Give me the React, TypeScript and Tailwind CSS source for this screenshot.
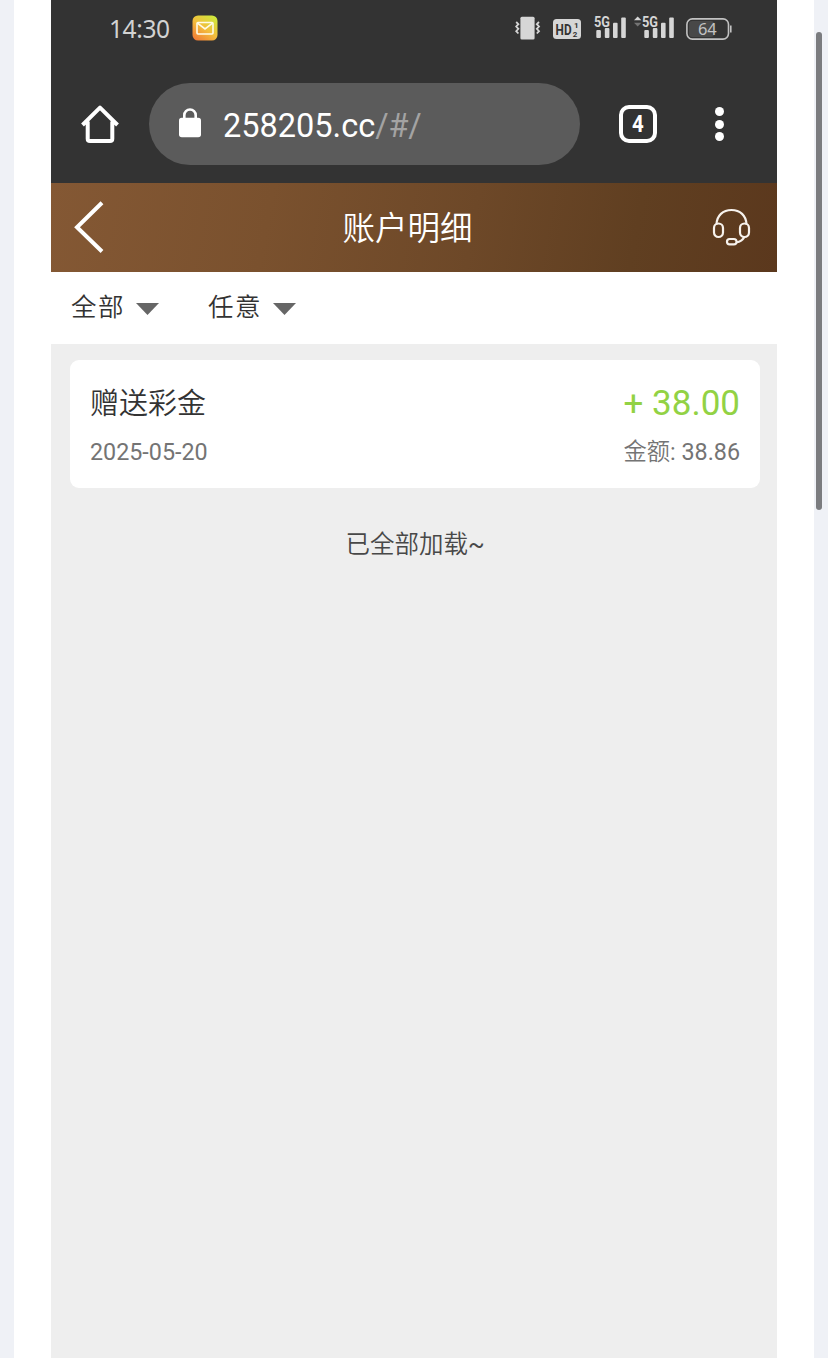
import { clsx } from "clsx";

const cjk = "font-['Roboto','Noto_Sans_CJK_SC',sans-serif]";

const filters = [
  { label: "全部", className: "" },
  { label: "任意", className: "ml-[49px]" },
];

const records = [
  { title: "赠送彩金", change: "+ 38.00", date: "2025-05-20", amount: "38.86" },
];

function MailBadge() {
  return (
    <svg className="ml-[22px] h-[26px] w-[26px]" viewBox="0 0 26 26" fill="none">
      <defs>
        <linearGradient id="mail" x1="3" y1="25" x2="21" y2="1" gradientUnits="userSpaceOnUse">
          <stop offset="0" stopColor="#f07a35" />
          <stop offset="0.5" stopColor="#f3bd3c" />
          <stop offset="1" stopColor="#cfe83c" />
        </linearGradient>
      </defs>
      <rect x="0.5" y="0.5" width="25" height="25" rx="5.5" fill="url(#mail)" />
      <rect x="5" y="7.5" width="16" height="11.5" rx="1" stroke="#fffbe6" strokeWidth="1.6" />
      <path d="M5.5 8.2 13 14l7.5-5.8" stroke="#fffbe6" strokeWidth="1.6" />
    </svg>
  );
}

function VibrateIcon() {
  return (
    <svg className="h-[24px] w-[26px]" viewBox="0 0 26 24" fill="none">
      <rect x="5.4" y="0.8" width="14.2" height="22.7" rx="1.5" fill="#d6d6d6" />
      <path
        d="M1.2 6l2.2 2.2-2.2 2.3 2.2 2.3-2.2 2.4 2.2 2.3M24 6l-2.2 2.2 2.2 2.3-2.2 2.3 2.2 2.4-2.2 2.3"
        stroke="#d6d6d6"
        strokeWidth="1.8"
      />
    </svg>
  );
}

function HdIcon() {
  return (
    <svg className="mt-[2px] ml-[12px] h-[20px] w-[28px]" viewBox="0 0 28 20">
      <rect width="28" height="20" rx="3.5" fill="#d6d6d6" />
      <g fill="#333" className="font-['Roboto',sans-serif] font-bold">
        <text x="2.6" y="15.6" fontSize="15.5" textLength="16" lengthAdjust="spacingAndGlyphs">HD</text>
        <text x="21" y="8.8" fontSize="8">1</text>
        <text x="19.8" y="17.6" fontSize="8">2</text>
      </g>
    </svg>
  );
}

function SignalIcon({ arrows = false, className }: { arrows?: boolean; className?: string }) {
  return (
    <svg className={clsx("mb-[5px] h-[27px]", className)} viewBox={arrows ? "-8 -3 41 27" : "0 -3 33 27"} fill="#d6d6d6">
      {arrows && (
        <>
          <path d="M-8 5.3h7.4L-4.3 1.5z" />
          <path d="M-8 7.7h7.4l-3.7 3.8z" fill="#747474" />
        </>
      )}
      <text x="0" y="11.5" fontSize="15.5" textLength="16" lengthAdjust="spacingAndGlyphs" className="font-['Roboto',sans-serif] font-bold">5G</text>
      <rect x="2.3" y="15" width="4.6" height="8" rx="1" />
      <rect x="10.8" y="13" width="4.6" height="10" rx="1" />
      <rect x="19" y="7.8" width="4.6" height="15.2" rx="1" />
      <rect x="27.2" y="2.5" width="4.6" height="20.5" rx="1" />
    </svg>
  );
}

function BatteryIcon() {
  return (
    <svg className="mt-[1px] ml-[11px] h-[22px] w-[46px]" viewBox="0 0 46 22" fill="none">
      <rect x="3" y="3" width="25" height="16" rx="3" fill="#484848" />
      <rect x="0.9" y="0.9" width="41.6" height="20.2" rx="5.5" stroke="#c2c2c2" strokeWidth="1.6" />
      <path d="M44.8 7.5v7" stroke="#c2c2c2" strokeWidth="1.6" />
      <text x="12" y="17" fontSize="16.5" textLength="18.8" fill="#c2c2c2" className="font-['Noto_Sans',sans-serif]">64</text>
    </svg>
  );
}

function StatusBar() {
  return (
    <div className="flex h-[56px] items-center pr-[45px] pl-[58px]">
      <span className="w-[61px] pt-[3px] font-['Noto_Sans',sans-serif] text-[24.5px] leading-none tracking-[-0.4px] text-[#d2d2d2]">14:30</span>
      <MailBadge />
      <div className="ml-auto flex items-center">
        <VibrateIcon />
        <HdIcon />
        <SignalIcon className="ml-[13px] w-[33px]" />
        <SignalIcon arrows className="ml-[7px] w-[41px]" />
        <BatteryIcon />
      </div>
    </div>
  );
}

function BrowserBar() {
  return (
    <div className="flex h-[127px] items-center pt-[9px] pl-[30px]">
      <svg className="h-[40px] w-[38px]" viewBox="0 0 38 40" fill="none" stroke="#fff" strokeWidth="4" strokeLinejoin="round">
        <path d="M1.5 21 19 3.7 36.5 21M6.7 17.5v17.2q0 2.3 2.3 2.3h20q2.3 0 2.3-2.3V17.5" />
      </svg>
      <div className="ml-[30px] flex h-[82px] w-[431px] items-center rounded-full bg-[#5b5b5b] pl-[29px]">
        <svg className="mb-[2px] h-[30px] w-[24px]" viewBox="0 0 24 30" fill="none">
          <rect x="1" y="9.8" width="22" height="19.5" rx="2.8" fill="#fff" />
          <path d="M6.3 11V7.2a5.7 5.7 0 0 1 11.4 0V11" stroke="#fff" strokeWidth="2.6" />
        </svg>
        <span className="ml-[21px] pt-[4px] font-['Roboto',sans-serif] text-[32.5px] leading-none text-white">
          258205.cc<span className="tracking-[-0.2px] text-[#a3a3a3]">/#/</span>
        </span>
      </div>
      <div className="ml-[39px] flex h-[38px] w-[38px] items-center justify-center rounded-[10px] border-4 border-white font-['Roboto',sans-serif] text-[24px] leading-none font-bold text-white">
        <span className="scale-x-[0.85]">4</span>
      </div>
      <div className="ml-[58px] flex flex-col gap-[3.5px]">
        <i className="h-[9px] w-[9px] rounded-full bg-white" />
        <i className="h-[9px] w-[9px] rounded-full bg-white" />
        <i className="h-[9px] w-[9px] rounded-full bg-white" />
      </div>
    </div>
  );
}

function PageHeader() {
  return (
    <header className="flex h-[89px] items-center justify-between bg-[linear-gradient(100deg,#845834_0%,#7a512e_30%,#6d4828_58%,#603f21_80%,#5b381d_100%)] pr-[26px] pl-[23px]">
      <svg className="mb-[2px] h-[52px] w-[30px]" viewBox="0 0 30 52" fill="none" stroke="#fff" strokeWidth="4">
        <path d="M28 1.8 3 26.3 28 50.5" />
      </svg>
      <h1 className="mr-[1px] pt-[3px] text-[32.5px] leading-none font-[350] text-white">账户明细</h1>
      <svg className="mb-[2px] h-[38px] w-[39px]" viewBox="0 0 39 38" fill="none" stroke="#f7f2ed" strokeWidth="2.2">
        <rect x="2" y="15.5" width="9" height="13.5" rx="4.5" />
        <rect x="28" y="15.5" width="9" height="13.5" rx="4.5" />
        <path d="M4.5 16.5C4.8 7.5 11 2 19.5 2s14.7 5.5 15 14.5M32.5 29c-1.500 2.500-4.500 4.800-8 5.300" />
        <rect x="15" y="31" width="9.5" height="5.3" rx="2.6" />
      </svg>
    </header>
  );
}

export default function App() {
  return (
    <div className={clsx("flex h-[1358px] w-[828px] overflow-hidden bg-[#eff1f6] pl-[14px]", cjk)}>
      <main className="flex w-[800px] justify-center bg-white">
        <div className="flex w-[726px] flex-col bg-[#eee]">
          <div className="bg-[#333]">
            <StatusBar />
            <BrowserBar />
          </div>
          <PageHeader />
          <nav className="flex h-[72px] items-center bg-white pl-5 text-[#333]">
            {filters.map((filter) => (
              <button key={filter.label} className={clsx("flex items-center", filter.className)}>
                <span className="text-[25.5px] leading-none font-[350] tracking-[1.5px]">{filter.label}</span>
                <svg className="mt-[2px] ml-[11px] h-[12px] w-[23px]" viewBox="0 0 23 12">
                  <path d="M0 0h23L11.5 12z" fill="#666" />
                </svg>
              </button>
            ))}
          </nav>

          <section className="pr-[17px] pl-[19px] pt-4">
            {records.map((record) => (
              <article key={record.date} className="flex h-[128px] w-[690px] flex-col rounded-[9px] bg-white px-5 pt-[25px]">
                <div className="flex h-[36px] items-center justify-between">
                  <h2 className="pt-[3px] text-[29px] leading-none font-[350] text-[#333]">{record.title}</h2>
                  <span className="text-[35px] leading-none text-[#92d244]">{record.change}</span>
                </div>
                <div className="mt-[17px] flex h-[30px] items-center justify-between text-[23.3px] leading-none text-[#747474]">
                  <time>{record.date}</time>
                  <span>
                    <span className="font-[350]">金额</span>: {record.amount}
                  </span>
                </div>
              </article>
            ))}
            <p className="mt-[45px] text-center text-[24.5px] leading-none text-[#484848]">
              <span className="font-[350]">已全部加载</span>~
            </p>
          </section>
        </div>
      </main>
      <div className="mt-[32px] ml-[2px] h-[478px] w-[6px] rounded-full bg-[#7b7c7f]" />
    </div>
  );
}
